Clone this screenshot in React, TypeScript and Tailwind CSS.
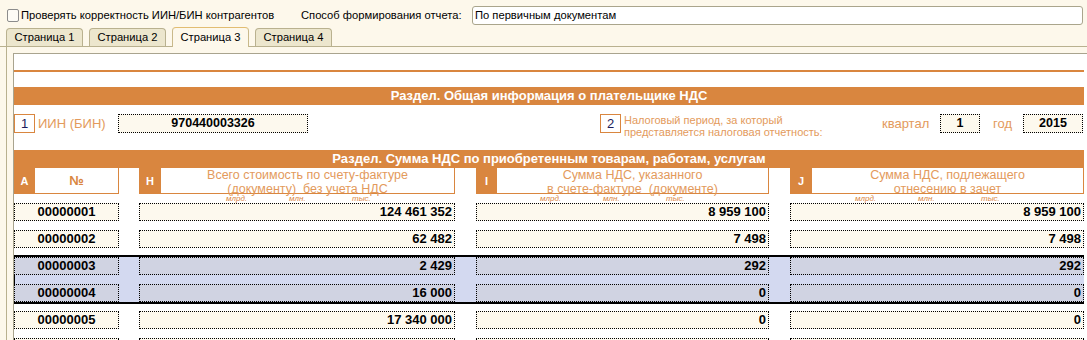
import React from "react";

const COLS = ["w-[105px]", "ml-[20px] w-[316px]", "ml-[21px] w-[293px]", "ml-[21px] w-[294px]"];

const rows = [
  ["00000001", "124 461 352", "8 959 100", "8 959 100"],
  ["00000002", "62 482", "7 498", "7 498"],
  ["00000003", "2 429", "292", "292"],
  ["00000004", "16 000", "0", "0"],
  ["00000005", "17 340 000", "0", "0"],
  ["", "", "", ""],
];

function Field({ text, center, sel }: { text: string; center?: boolean; sel?: boolean }) {
  return (
    <div
      className={`h-[18px] border border-dotted border-black text-[13px] font-bold leading-[16px] ${
        sel ? "bg-[#d0d3e2]" : "bg-[#fdf9ee]"
      } ${center ? "text-center" : "pr-[2px] text-right"}`}
    >
      {text}
    </div>
  );
}

function Row({ r, sel }: { r: string[]; sel?: boolean }) {
  return (
    <div className="flex">
      {r.map((t, i) => (
        <div key={i} className={COLS[i]}>
          <Field text={t} center={i === 0} sel={sel} />
        </div>
      ))}
    </div>
  );
}

function ColHead({ letter, children, wide }: { letter: string; children: React.ReactNode; wide?: boolean }) {
  return (
    <div className="flex h-[26px]">
      <div
        className={`${wide ? "w-[22px]" : "w-[21px]"} flex items-center justify-center bg-[#d9863f] text-[11px] font-bold text-white`}
      >
        {letter}
      </div>
      <div className="flex-1 border-r border-b border-[#d9863f] bg-white">{children}</div>
    </div>
  );
}

function HeadLabel({ a, b }: { a: string; b: string }) {
  return (
    <div className="text-center text-[12.5px] leading-[14px] whitespace-pre text-[#e39a5c]">
      {a}
      <br />
      {b}
    </div>
  );
}

function Section({ title }: { title: string }) {
  return (
    <div className="h-[18px] w-[1070px] bg-[#d9863f] text-center text-[13px] font-bold leading-[18px] text-white">
      {title}
    </div>
  );
}

const Tab = ({ label, active }: { label: string; active?: boolean }) => (
  <div
    className={
      active
        ? "mb-[-1px] h-[20px] w-[77px] rounded-t-[4px] border border-b-0 border-[#c9b98a] border-t-[#e2bd72] bg-[#fdf8eb] text-center text-[11.2px] leading-[18px]"
        : "h-[18px] w-[77px] rounded-t-[4px] border border-b-0 border-[#b9b18f] bg-[#ece6cd] text-center text-[11.2px] leading-[17px]"
    }
  >
    {label}
  </div>
);

export default function App() {
  return (
    <div className="h-[340px] w-[1087px] overflow-hidden bg-[#fdf8eb] font-['Liberation_Sans',Arial,sans-serif] text-[11.2px] text-black">
      <div className="flex h-[28px] items-center pt-[3px]">
        <div className="flex w-[301px] items-center pl-[7px]">
          <div className="h-[13px] w-[12px] rounded-[2px] border border-[#8c8c8c] bg-[#fdfbf5]" />
          <span className="ml-[2px]">Проверять корректность ИИН/БИН контрагентов</span>
        </div>
        <span className="w-[171px]">Способ формирования отчета:</span>
        <div className="mr-[4px] h-[19px] flex-1 rounded-[3px] border border-[#aaa58c] bg-white px-[2px] leading-[17px]">
          По первичным документам
        </div>
      </div>

      <div className="flex h-[19px] items-end gap-[6px] border-b border-[#b9b18f] pl-[6px]">
        <Tab label="Страница 1" />
        <Tab label="Страница 2" />
        <Tab label="Страница 3" active />
        <Tab label="Страница 4" />
      </div>

      <div className="ml-[6px] h-[300px] border-l border-[#b9b18f] pt-[6px] pl-[6px]">
        <div className="h-full border-t border-l border-[#a9a48e] bg-white">
          <div className="mt-[16px] h-[2px] w-[1070px] bg-[#d9863f]" />

          <div className="mt-[15px]">
            <Section title="Раздел. Общая информация о плательщике НДС" />
          </div>

          <div className="mt-[9px] flex h-[19px] items-start">
            <div className="flex w-[104px]">
              <div className="h-[19px] w-[21px] border border-[#d9863f] bg-white text-center text-[13px] leading-[17px] text-[#1c1c5c]">
                1
              </div>
              <span className="ml-[3px] text-[13px] leading-[19px] text-[#e39a5c]">ИИН (БИН)</span>
            </div>
            <div className="h-[19px] w-[190px] border border-dotted border-black bg-[#fdf9ee] text-center text-[12.5px] font-bold leading-[17px]">
              970440003326
            </div>
            <div className="w-[292px]" />
            <div className="h-[19px] w-[21px] border border-[#d9863f] bg-white text-center text-[13px] leading-[17px] text-[#1c1c5c]">
              2
            </div>
            <div className="ml-[3px] w-[258px] text-[11px] leading-[12px] text-[#e39a5c]">
              Налоговый период, за который
              <br />
              представляется налоговая отчетность:
            </div>
            <span className="w-[58px] text-[13px] leading-[19px] text-[#e39a5c]">квартал</span>
            <div className="h-[19px] w-[40px] border border-dotted border-black bg-[#fdf9ee] text-center text-[12.5px] font-bold leading-[17px]">
              1
            </div>
            <span className="w-[43px] pl-[13px] text-[13px] leading-[19px] text-[#e39a5c]">год</span>
            <div className="h-[19px] w-[60px] border border-dotted border-black bg-[#fdf9ee] text-center text-[12.5px] font-bold leading-[17px]">
              2015
            </div>
          </div>

          <div className="mt-[17px]">
            <Section title="Раздел. Сумма НДС по приобретенным товарам, работам, услугам" />
          </div>

          <div className="flex">
            <div className={COLS[0]}>
              <ColHead letter="A">
                <div className="text-center text-[13px] font-bold leading-[25px] text-[#d9863f]">№</div>
              </ColHead>
            </div>
            <div className={COLS[1]}>
              <ColHead letter="H" wide>
                <HeadLabel a="Всего стоимость по счету-фактуре" b="(документу)  без учета НДС" />
              </ColHead>
            </div>
            <div className={COLS[2]}>
              <ColHead letter="I">
                <HeadLabel a="Сумма НДС, указанного" b="в счете-фактуре  (документе)" />
              </ColHead>
            </div>
            <div className={COLS[3]}>
              <ColHead letter="J" wide>
                <HeadLabel a="Сумма НДС, подлежащего" b="отнесению в зачет" />
              </ColHead>
            </div>
          </div>

          <div className="flex h-[9px]">
            <div className={COLS[0]} />
            {[1, 2, 3].map((i) => (
              <div key={i} className={`${COLS[i]} flex justify-end pr-[40px]`}>
                {["млрд.", "млн.", "тыс."].map((s) => (
                  <span key={s} className="w-[63px] text-[8px] leading-[9px] italic text-[#d9863f]">
                    {s}
                  </span>
                ))}
              </div>
            ))}
          </div>

          <Row r={rows[0]} />
          <div className="mt-[9px]">
            <Row r={rows[1]} />
          </div>

          <div className="mt-[7px] w-[1070px] border-y-2 border-black bg-[#d3d9f0] shadow-[inset_1px_0_0_#000]">
            <Row r={rows[2]} sel />
            <div className="mt-[9px]">
              <Row r={rows[3]} sel />
            </div>
          </div>

          <div className="mt-[7px]">
            <Row r={rows[4]} />
          </div>
          <div className="mt-[9px]">
            <Row r={rows[5]} />
          </div>
        </div>
      </div>
    </div>
  );
}
